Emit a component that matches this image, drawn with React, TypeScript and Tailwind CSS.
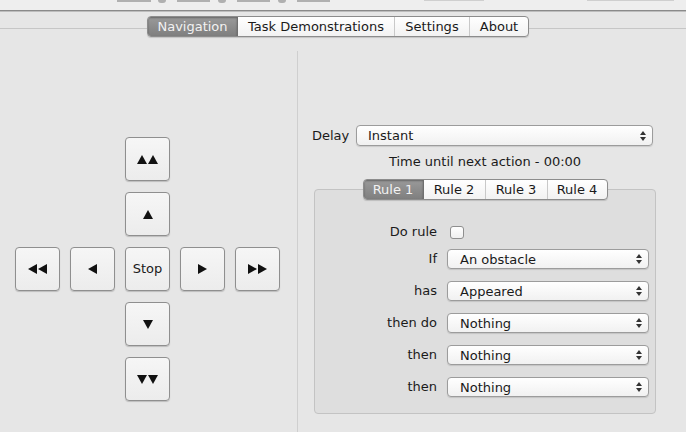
import React from "react";

type Dir = "up" | "down" | "left" | "right";

function Tri({ dir }: { dir: Dir }) {
  const pts: Record<Dir, string> = {
    up: "0,9 5,0 10,9",
    down: "0,0 10,0 5,9",
    left: "9,0 9,10 0,5",
    right: "0,0 0,10 9,5",
  };
  const vertical = dir === "up" || dir === "down";
  return (
    <svg width={vertical ? 10 : 9} height={vertical ? 9 : 10} viewBox={vertical ? "0 0 10 9" : "0 0 9 10"}>
      <polygon points={pts[dir]} fill="#111" />
    </svg>
  );
}

function PadButton({ children }: { children?: React.ReactNode }) {
  return (
    <div className="w-[45px] h-[44px] rounded-[4px] border border-[#8f8f8f] bg-gradient-to-b from-[#f6f6f6] to-[#ececec] shadow-[0_1px_1px_rgba(0,0,0,0.18)] flex items-center justify-center gap-[1px] text-[13px] text-[#1a1a1a]">
      {children}
    </div>
  );
}

function Arrows() {
  return (
    <div className="flex flex-col items-center gap-[2px]">
      <svg width="6" height="4" viewBox="0 0 6 4">
        <polygon points="0,4 3,0 6,4" fill="#333" />
      </svg>
      <svg width="6" height="4" viewBox="0 0 6 4">
        <polygon points="0,0 6,0 3,4" fill="#333" />
      </svg>
    </div>
  );
}

function Select({ value, className, pl }: { value: string; className: string; pl: string }) {
  return (
    <div
      className={`${className} ${pl} rounded-[4px] border border-[#9c9c9c] bg-gradient-to-b from-[#ffffff] to-[#f1f1f1] shadow-[0_1px_1px_rgba(0,0,0,0.12)] flex items-center justify-between pr-[6px] text-[13px] text-[#1a1a1a]`}
    >
      <span className="leading-none">{value}</span>
      <Arrows />
    </div>
  );
}

function Segmented({ items, sel, widths, h }: { items: string[]; sel: number; widths: string[]; h: string }) {
  return (
    <div className={`flex ${h} rounded-[4px] border border-[#8c8c8c] bg-gradient-to-b from-[#ffffff] to-[#f2f2f2] shadow-[0_1px_1px_rgba(0,0,0,0.15)] overflow-hidden`}>
      {items.map((it, i) => (
        <div
          key={it}
          className={`${widths[i]} flex items-center justify-center text-[13px] ${
            i === sel
              ? "bg-gradient-to-b from-[#9a9a9a] to-[#7f7f7f] text-[#f2f2f2] shadow-[inset_0_1px_2px_rgba(0,0,0,0.35)] border-r border-[#6f6f6f]"
              : i < items.length - 1
              ? "text-[#1a1a1a] border-r border-[#c9c9c9]"
              : "text-[#1a1a1a]"
          }`}
        >
          {it}
        </div>
      ))}
    </div>
  );
}

export default function App() {
  return (
    <div
      className="w-[686px] h-[432px] overflow-hidden bg-[#e6e6e6] flex flex-col"
      style={{ fontFamily: '"DejaVu Sans", "Liberation Sans", sans-serif' }}
    >
      {/* top window strip */}
      <div className="h-[10px] bg-[#eeeeee] flex items-start">
        <div className="ml-[117px] w-[34px] h-[2px] bg-[#b0b0b0]" />
        <div className="ml-[7px] w-[8px] h-[3px] rounded-b-full bg-[#b0b0b0]" />
        <div className="ml-[11px] w-[33px] h-[2px] bg-[#b0b0b0]" />
        <div className="ml-[8px] w-[8px] h-[3px] rounded-b-full bg-[#b0b0b0]" />
        <div className="ml-[11px] w-[33px] h-[2px] bg-[#b0b0b0]" />
        <div className="ml-[8px] w-[8px] h-[3px] rounded-b-full bg-[#b0b0b0]" />
        <div className="ml-[11px] w-[33px] h-[2px] bg-[#b0b0b0]" />
        <div className="ml-[94px] w-[60px] h-[1px] bg-[#cfcfcf]" />
        <div className="ml-[103px] w-[87px] h-[1px] bg-[#cfcfcf]" />
      </div>
      <div className="h-[1px] bg-[#8a8a8a]" />
      <div className="h-[1px] bg-[#bdbdbd]" />

      {/* main tabs */}
      <div className="h-[39px] flex items-start pt-[4px]">
        <div className="w-[147px] h-[1px] bg-[#c6c6c6] mt-[12px]" />
        <Segmented
          items={["Navigation", "Task Demonstrations", "Settings", "About"]}
          sel={0}
          widths={["w-[90px]", "w-[157px]", "w-[75px]", "w-[58px]"]}
          h="h-[21px]"
        />
        <div className="flex-1 h-[1px] bg-[#c6c6c6] mt-[12px]" />
      </div>

      <div className="flex flex-1">
        {/* left panel */}
        <div className="w-[298px] border-r border-[#cfcfcf] pt-[86px] pl-[15px]">
          <div className="flex flex-col items-center gap-[11px] w-fit">
            <PadButton>
              <Tri dir="up" />
              <Tri dir="up" />
            </PadButton>
            <PadButton>
              <Tri dir="up" />
            </PadButton>
            <div className="flex gap-[10px]">
              <PadButton>
                <Tri dir="left" />
                <Tri dir="left" />
              </PadButton>
              <PadButton>
                <Tri dir="left" />
              </PadButton>
              <PadButton>Stop</PadButton>
              <PadButton>
                <Tri dir="right" />
              </PadButton>
              <PadButton>
                <Tri dir="right" />
                <Tri dir="right" />
              </PadButton>
            </div>
            <PadButton>
              <Tri dir="down" />
            </PadButton>
            <PadButton>
              <Tri dir="down" />
              <Tri dir="down" />
            </PadButton>
          </div>
        </div>

        {/* right panel */}
        <div className="flex-1 pt-[74px] pl-[14px] flex flex-col">
          <div className="flex items-center h-[21px]">
            <span className="text-[13px] text-[#1a1a1a] w-[44px]">Delay</span>
            <Select value="Instant" className="w-[297px] h-[21px]" pl="pl-[11px]" />
          </div>
          <div className="text-[13px] text-[#1a1a1a] text-center w-[342px] ml-[2px] mt-[7px] h-[17px] leading-[17px]">
            Time until next action - 00:00
          </div>

          <div className="ml-[2px] w-[342px] mt-[9px] flex flex-col">
            <div className="flex justify-center relative z-10">
              <Segmented
                items={["Rule 1", "Rule 2", "Rule 3", "Rule 4"]}
                sel={0}
                widths={["w-[60px]", "w-[62px]", "w-[62px]", "w-[59px]"]}
                h="h-[21px]"
              />
            </div>
            <div className="-mt-[11px] h-[225px] rounded-[4px] border border-[#c3c3c3] bg-[#dedede] pt-[32px]">
              <div className="flex items-center h-[20px] mb-[7px]">
                <span className="w-[122px] text-right text-[13px] text-[#1a1a1a]">Do rule</span>
                <div className="ml-[13px] w-[14px] h-[13px] rounded-[3px] border border-[#8f8f8f] bg-gradient-to-b from-[#ffffff] to-[#f0f0f0]" />
              </div>
              <div className="flex flex-col gap-[12px]">
                {[
                  ["If", "An obstacle"],
                  ["has", "Appeared"],
                  ["then do", "Nothing"],
                  ["then", "Nothing"],
                  ["then", "Nothing"],
                ].map(([l, v], i) => (
                  <div key={i} className="flex items-center h-[20px]">
                    <span className="w-[122px] text-right text-[13px] text-[#1a1a1a]">{l}</span>
                    <Select value={v} className="ml-[10px] w-[202px] h-[20px]" pl="pl-[12px]" />
                  </div>
                ))}
              </div>
            </div>
          </div>
        </div>
      </div>
    </div>
  );
}
